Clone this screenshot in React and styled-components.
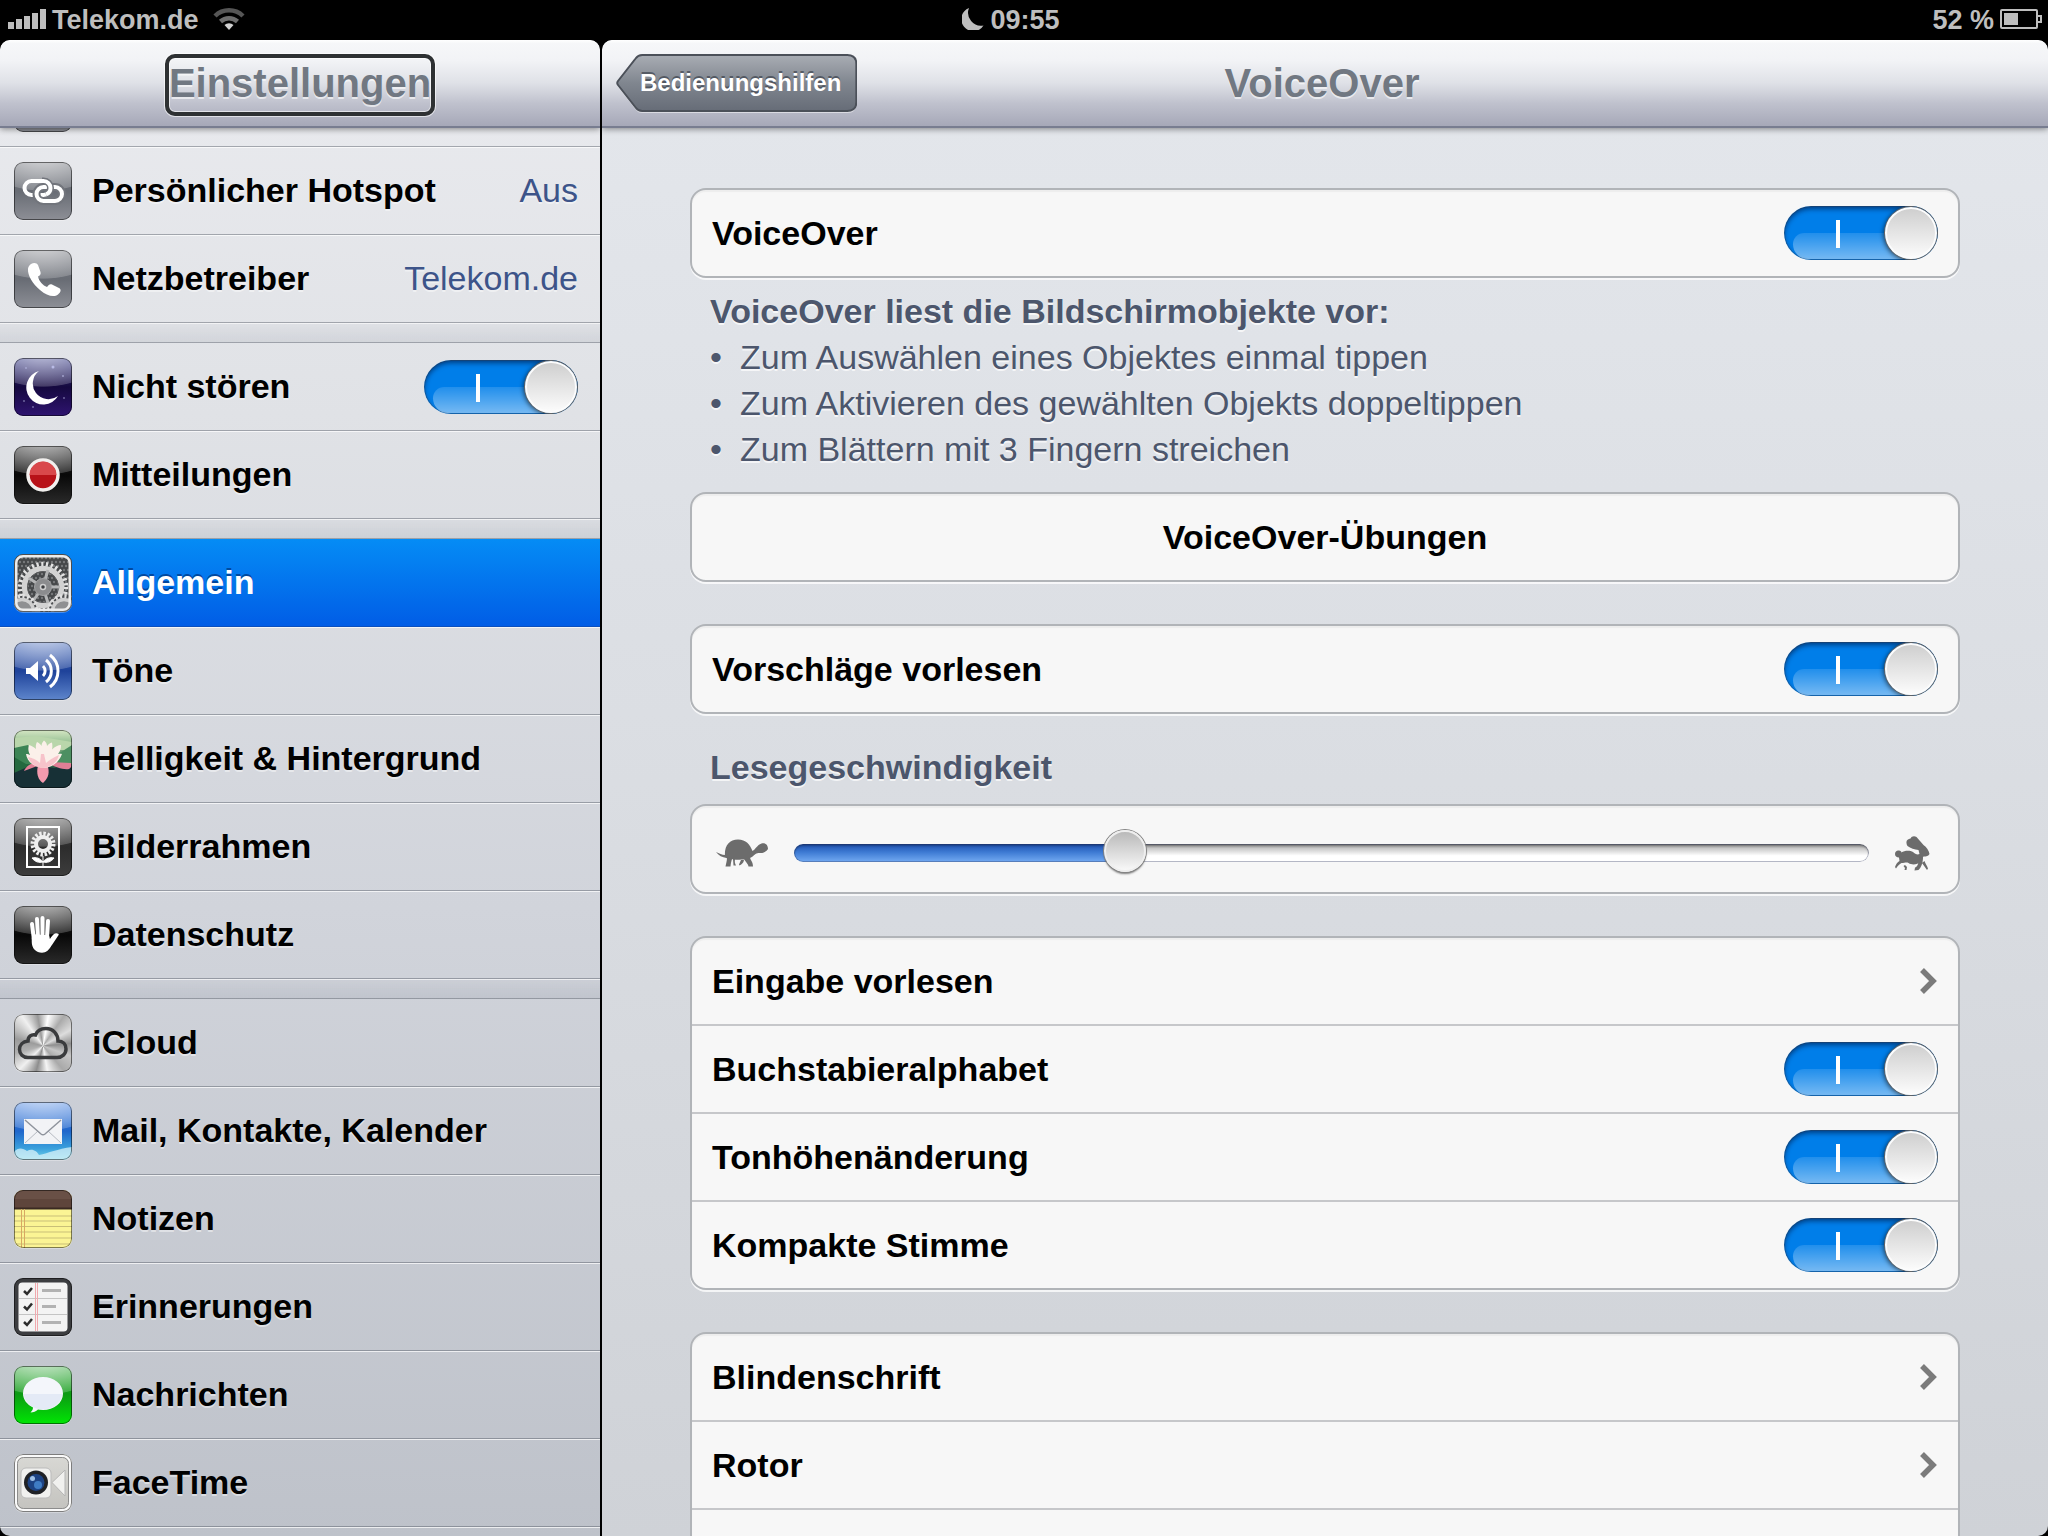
import React, { useState } from 'react'
import styled, { createGlobalStyle, css } from 'styled-components'

const GlobalStyle = createGlobalStyle`
  *,
  *::before,
  *::after {
    box-sizing: border-box;
  }

  body {
    margin: 0;
    background: #000;
    font-family: 'Liberation Sans', Arial, sans-serif;
    font-size: 34px;
    color: #000;
  }

  a {
    color: inherit;
    text-decoration: none;
  }

  ul {
    list-style: none;
    margin: 0;
    padding: 0;
  }
`

const Screen = styled.div`
  height: 100vh;
  display: flex;
  flex-direction: column;
  overflow: hidden;
`

const StatusBar = styled.div`
  height: 40px;
  flex: none;
  display: grid;
  grid-template-columns: 1fr auto 1fr;
  align-items: center;
  padding: 0 6px 0 8px;
  background: #000;
  color: #bebebe;
  font-size: 27px;
  line-height: 40px;
  font-weight: bold;
`

const StatusGroup = styled.div`
  display: flex;
  align-items: center;
  justify-content: ${({ $end }) => ($end ? 'flex-end' : 'flex-start')};
  gap: 6px;

  svg {
    flex: none;
    margin-bottom: 2px;
  }
`

const Clock = styled.div`
  position: relative;

  svg {
    position: absolute;
    right: 100%;
    top: 8px;
    margin-right: 6px;
  }
`

const Panes = styled.div`
  flex: 1;
  min-height: 0;
  display: flex;
  gap: 2px;
`

const Pane = styled.section`
  display: flex;
  flex-direction: column;
  min-height: 0;
  overflow: hidden;
`

const Sidebar = styled(Pane)`
  width: 600px;
  flex: none;
  border-radius: 10px 10px 0 10px;
  background: linear-gradient(#eaebef, #e0e2e6 25%, #d1d4db 58%, #bec2ca);
`

const Detail = styled(Pane)`
  flex: 1;
  border-radius: 10px 10px 10px 0;
  background: linear-gradient(#e4e7ec, #dbdee3 45%, #cfd2d7);
`

const NavBar = styled.header`
  position: relative;
  z-index: 1;
  height: 88px;
  flex: none;
  display: grid;
  grid-template-columns: 1fr auto 1fr;
  align-items: center;
  padding: ${({ $back }) => ($back ? '0 20px 0 14px' : '0 14px')};
  border-bottom: 2px solid #787d90;
  border-radius: 10px 10px 0 0;
  background: linear-gradient(#fff, #f6f7f9 4%, #f2f3f6 24%, #dfe1e7 50%, #bfc1cd 74%, #a6a8b8);
  box-shadow: 0 1px 6px rgba(0, 0, 0, 0.45);
`

const Title = styled.h1`
  grid-column: 2;
  margin: 4px 0 0;
  padding: 0 0 4px;
  border: 4px solid transparent;
  font-size: 40px;
  line-height: 50px;
  font-weight: bold;
  color: #717882;
  text-shadow: 0 2px 0 rgba(255, 255, 255, 0.6);
  ${({ $focused }) =>
    $focused &&
    css`
      border-color: #2e3133;
      border-radius: 10px;
      box-shadow: 0 0 0 1px rgba(255, 255, 255, 0.6), inset 0 0 0 1px rgba(255, 255, 255, 0.6);
    `}
`

const BackButton = styled.button`
  position: relative;
  justify-self: start;
  height: 58px;
  padding: 0 16px 0 24px;
  border: 0;
  background: none;
  font: bold 24px 'Liberation Sans', Arial, sans-serif;
  color: #fff;
  text-shadow: 0 -2px 0 rgba(60, 66, 76, 0.7);

  svg {
    position: absolute;
    inset: 0;
    width: 100%;
    height: 60px;
  }

  span {
    position: relative;
  }
`

/* the list is scrolled so that its first row is almost out of view */
const Menu = styled.nav`
  display: flex;
  flex-direction: column;
  gap: 20px;
  margin-top: -69px;
`

const MenuGroup = styled.ul`
  position: relative;

  & + &::before {
    content: '';
    position: absolute;
    left: 0;
    right: 0;
    bottom: 100%;
    height: 20px;
    border-bottom: 1px solid rgba(80, 86, 98, 0.45);
    background: linear-gradient(rgba(70, 80, 100, 0.02), rgba(70, 80, 100, 0.1));
  }
`

const MenuRow = styled.li`
  height: 88px;
  display: flex;
  align-items: center;
  gap: 20px;
  padding: 0 22px 0 14px;
  border-bottom: 1px solid rgba(80, 86, 98, 0.45);
  box-shadow: 0 1px 0 rgba(255, 255, 255, 0.7);
  font-weight: bold;
  text-shadow: 0 2px 0 rgba(255, 255, 255, 0.45);

  ${({ $active }) =>
    $active &&
    css`
      border-color: #0b4fbd;
      background: linear-gradient(#058cf5, #015de6);
      color: #fff;
      text-shadow: 0 -2px 0 rgba(0, 30, 90, 0.55);
    `}
`

const MenuLabel = styled.label`
  flex: 1;
  white-space: nowrap;
`

const MenuValue = styled.span`
  font-weight: normal;
  color: #3d5489;
`

const Tile = styled.span`
  width: 58px;
  height: 58px;
  flex: none;
  border-radius: 9px;
  overflow: hidden;
  background: ${({ $fill }) => $fill};
  box-shadow: 0 1px 0 rgba(255, 255, 255, 0.3);

  svg {
    display: block;
  }
`

const Switch = styled.input.attrs({ type: 'checkbox' })`
  appearance: none;
  position: relative;
  width: 154px;
  height: 54px;
  flex: none;
  margin: 0;
  overflow: hidden;
  border-radius: 27px;
  background: linear-gradient(#fff, #fff) 52px 14px / 4px 28px no-repeat, #007ee9;
  box-shadow: inset 0 0 0 1px rgba(60, 60, 70, 0.35), inset 0 3px 5px rgba(0, 20, 60, 0.6);

  &::before {
    content: '';
    position: absolute;
    left: 9px;
    right: 0;
    top: 27px;
    bottom: 1px;
    border-radius: 18px 0 0 24px;
    background: linear-gradient(rgba(255, 255, 255, 0.13), rgba(255, 255, 255, 0.46));
  }

  &::after {
    content: '';
    position: absolute;
    top: 1px;
    right: 1px;
    width: 52px;
    height: 52px;
    border: 2px solid #fcfcfc;
    border-radius: 50%;
    background: linear-gradient(#cfcfcf, #fbfbfb);
    box-shadow: 0 0 0 1px #666, -1px 1px 4px 1px rgba(0, 0, 0, 0.5);
  }

  &:not(:checked) {
    background: #e4e4e4;
  }

  &:not(:checked)::after {
    right: auto;
    left: 1px;
  }
`

const Content = styled.main`
  padding: 60px 88px 0;
`

const Card = styled.div`
  border: 2px solid #b1b4b8;
  border-radius: 16px;
  background: #f7f7f7;
  box-shadow: 0 2px 0 rgba(255, 255, 255, 0.75), inset 0 2px 1px rgba(0, 0, 0, 0.04);

  & + & {
    margin-top: 42px;
  }
`

const rowStyle = css`
  width: 100%;
  height: 88px;
  display: flex;
  align-items: center;
  justify-content: space-between;
  padding: 0 20px;
  border-bottom: 2px solid #c6c7ca;
  font-weight: bold;

  &:last-child {
    height: 86px;
    border-bottom: 0;
  }
`

const Row = styled.div`
  ${rowStyle}
`

const LinkRow = styled.a`
  ${rowStyle}
`

const CardButton = styled.button`
  display: block;
  width: 100%;
  height: 86px;
  padding: 0;
  border: 0;
  background: none;
  font: bold 34px 'Liberation Sans', Arial, sans-serif;
  color: #000;
`

const Note = styled.div`
  padding: 10px 20px 20px;
  line-height: 46px;
  color: #4c566c;
  text-shadow: 0 2px 0 rgba(255, 255, 255, 0.7);

  strong {
    display: block;
  }

  li {
    display: flex;
  }

  li::before {
    content: '•';
    width: 30px;
  }
`

const SectionLabel = styled.label`
  display: block;
  padding: 30px 20px 14px;
  line-height: 46px;
  font-weight: bold;
  color: #4c566c;
  text-shadow: 0 2px 0 rgba(255, 255, 255, 0.7);
`

const SliderRow = styled.div`
  height: 86px;
  display: flex;
  align-items: center;
  gap: 26px;
  padding: 8px 28px 0 24px;

  svg {
    flex: none;
  }
`

const Slider = styled.input.attrs({ type: 'range' })`
  appearance: none;
  flex: 1;
  min-width: 0;
  height: 42px;
  margin: 0;
  background: none;

  &::-webkit-slider-runnable-track {
    height: 18px;
    border-radius: 9px;
    background: linear-gradient(#1e4fae, #3d7ad3 45%, #73aaf2) 0 0 / var(--fill) 100% no-repeat,
      linear-gradient(#8b8b8b, #c9c9c9 25%, #fff 65%, #fff);
    box-shadow: inset 0 0 0 1px rgba(40, 50, 90, 0.35), inset 0 2px 2px rgba(0, 0, 0, 0.25);
  }

  &::-webkit-slider-thumb {
    appearance: none;
    width: 42px;
    height: 42px;
    margin-top: -14px;
    border: 2px solid #eee;
    border-radius: 50%;
    background: linear-gradient(#b9b9b9, #f8f8f8);
    box-shadow: 0 0 0 1px #858585, 0 2px 2px rgba(0, 0, 0, 0.5);
  }
`

const gloss =
  'radial-gradient(ellipse 66px 40px at 50% -11px, rgba(255,255,255,.75), rgba(255,255,255,.2) 98%, transparent 100%)'

const fills = {
  gray: `${gloss}, linear-gradient(#7d8087, #686c74 50%, #8d8f96)`,
  night: `${gloss}, linear-gradient(#3b3f8c, #15093f 50%, #2f1470)`,
  black: `${gloss}, linear-gradient(#333, #080808 50%, #2a2a2a)`,
  dark: `${gloss}, linear-gradient(#4a4a4a, #2c2c2c 50%, #3d3d3d)`,
  gear: '#454749',
  blue: `${gloss}, linear-gradient(#4e70bd, #1e429a 50%, #5e86cc)`,
  lotus: 'linear-gradient(#d5e6c4, #8dbb8c 25%, #2f6347 60%, #14262c)',
  metal:
    'conic-gradient(from 10deg at 50% 55%, #fff, #aaa 25deg, #ddd 50deg, #8f8f8f 75deg, #c6c6c6 100deg, #a9a9a9 130deg, #f5f5f5 160deg, #8d8d8d 185deg, #f0f0f0 215deg, #b0b0b0 245deg, #9b9b9b 275deg, #f0f0f0 315deg, #999 340deg, #fff)',
  mail: `${gloss}, linear-gradient(#5b90e4, #1f66cb 50%, #3aa0dc 80%, #74d6ea)`,
  notes: '#fbf494',
  list: '#3c3d40',
  green: `${gloss}, linear-gradient(#4fb455, #0c9a13 48%, #00e604)`,
  facetime: 'linear-gradient(#d9d9d5, #c3c2be)',
}

function Glyph({ name }) {
  switch (name) {
    case 'hotspot':
      return (
        <g fill="none" stroke="#fff" strokeWidth="4">
          <rect x="10.5" y="19" width="26" height="14" rx="7" />
          <rect x="22.5" y="25" width="25.500" height="14" rx="7" stroke="#72757c" strokeWidth="8" />
          <rect x="22.5" y="25" width="25.500" height="14" rx="7" />
          <path d="M28 19h1.500a7 7 0 0 1 7 7c0 3-2 5.500-4.500 6.500" stroke="#72757c" strokeWidth="7" />
          <path d="M26 19h3.500a7 7 0 0 1 7 7c0 3-2 5.500-4.500 6.500" />
        </g>
      )
    case 'phone':
      return (
        <path
          fill="#fff"
          d="M17 14c3-2 6-1 7 1l2.500 7c.7 2-.5 3.500-2.500 4.500 1 5 5 9 9 10.500 1.500-2 3-3.500 5-2.500l7 3.500c2.500 1.500 2 4-1 6.500-4 3-11 1.500-18-4.500C18.500 34 13.500 25 14 19c.2-2 1.200-4 3-5z"
        />
      )
    case 'moon':
      return (
        <g fill="#fff">
          <path d="M25 13a17 17 0 1 0 19 25A15 15 0 0 1 25 13z" />
          <g fill="#b9bbe6">
            <circle cx="39" cy="9" r="1.500" />
            <circle cx="12" cy="10" r="1" opacity=".6" />
            <circle cx="49" cy="18" r="1" opacity=".7" />
            <circle cx="10" cy="43" r="1" opacity=".5" />
            <circle cx="50" cy="40" r="1" opacity=".5" />
            <circle cx="19" cy="49" r="1" opacity=".5" />
          </g>
        </g>
      )
    case 'record':
      return (
        <g>
          <circle cx="29" cy="29" r="15" fill="#b81218" stroke="#f2f0ee" strokeWidth="3.500" />
          <path d="M15.500 29a13.500 13.500 0 0 1 27 0z" fill="#d9484b" />
        </g>
      )
    case 'gear':
      return (
        <g>
          <g fill="#77797b">
            {Array.from({ length: 13 * 13 }, (_, i) => (
              <circle key={i} cx={4 + (i % 13) * 4 + (Math.floor(i / 13) % 2) * 2} cy={4 + Math.floor(i / 13) * 4} r="1.200" />
            ))}
          </g>
          <circle cx="29" cy="33" r="23" fill="none" stroke="#e4e4e4" strokeWidth="4.500" strokeDasharray="2.200 2.614" />
          <circle cx="29" cy="33" r="18.500" fill="none" stroke="#d2d2d2" strokeWidth="5.500" />
          <circle cx="29" cy="33" r="15.500" fill="none" stroke="#5b5c5e" strokeWidth="1" />
          <path
            d="M29 33L34 16M29 33L14.500 24M29 33L19 47M29 33L34 49M29 33H46"
            stroke="#b4b5b6"
            strokeWidth="3"
          />
          <circle cx="29" cy="33" r="8.500" fill="#8b8c8e" stroke="#a2a3a5" strokeWidth="1" />
          <circle cx="29" cy="33" r="2.500" fill="#3b3d40" stroke="#cfcfcf" strokeWidth="1.500" />
          <circle cx="8" cy="57" r="15" fill="#4a4c4f" stroke="#e0e0e0" strokeWidth="4" strokeDasharray="2.200 2.513" />
          <circle cx="50" cy="57" r="15" fill="#4a4c4f" stroke="#e0e0e0" strokeWidth="4" strokeDasharray="2.200 2.513" />
          <g fill="#8f9092" stroke="#cfcfcf" strokeWidth="3.500">
            <circle cx="8" cy="57" r="11.500" />
            <circle cx="50" cy="57" r="11.500" />
          </g>
          <rect x="2" y="2" width="54" height="54" rx="7" fill="none" stroke="#ececec" strokeWidth="3" />
        </g>
      )
    case 'sound':
      return (
        <g>
          <path d="M12 26h4l8-7v20l-8-7h-4z" fill="#fff" />
          <g fill="none" stroke="#fff" strokeWidth="3">
            <path d="M29 24a7 7 0 0 1 0 10" />
            <path d="M32 18a14 14 0 0 1 0 22" />
            <path d="M36 13a20 20 0 0 1 0 32" />
          </g>
        </g>
      )
    case 'lotus':
      return (
        <g>
          <path d="M0 8l22-2 36 6v8L0 20z" fill="#b9d6ab" />
          <path d="M0 18l14-3 10 10-8 12-16 2z" fill="#3c8455" />
          <path d="M44 24l14-9v20l-18-1z" fill="#4d8f62" />
          <path d="M0 40l20-6 20 4 18-4v24H0z" fill="#173036" />
          <path d="M0 27l12 7 8 0-20 9z" fill="#24693f" />
          <path d="M26 35l-16 6c2-5 7-8 14-9zM36 32l21 1c1 3 0 5-2 6-6 1-14-2-19-5z" fill="#e17f96" />
          <path d="M24 36l10 1c2 8-1 12-5 16-5-3-7-10-5-17z" fill="#f49aae" />
          <path
            d="M29 38C19 37 13 31 12 24c2 0 3 .5 4 1-2-4-2-7-1-10 3 1 5 2 7 4-.5-3 0-5 1-7 2 1 3.500 2 4.500 4 0-2 1-4 2.500-5.500 2 1.500 3 3.500 3 5.500 1.500-2 3-3 5-3.500.5 3 .5 5 0 7 3-3 6-4.500 9-4.500 0 4-1 6-3 9 1-.5 3-.5 4 0-3 8-9 13.500-19 14z"
            fill="#fbf0ea"
          />
          <path d="M29 38c-8-1-13-5-15-11 5 1 9 3 12 6l1-9 3 0 2 9c3-3 7-5 13-8-2 8-8 12-16 13z" fill="#f5b4bf" opacity=".75" />
        </g>
      )
    case 'frame':
      return (
        <g>
          <rect x="13" y="9" width="32" height="40" fill="none" stroke="#fff" strokeWidth="2" />
          <circle cx="29" cy="26" r="10" fill="none" stroke="#eee" strokeWidth="5" strokeDasharray="2.300 1.627" />
          <circle cx="29" cy="26" r="7" fill="none" stroke="#eee" strokeWidth="4" />
          <path d="M29 38v11M29 44c-3-4-7-5-11-4 3 4 7 5 11 4zm0 0c3-4 7-5 11-4-3 4-7 5-11 4z" fill="#fff" stroke="#fff" strokeWidth="1" />
        </g>
      )
    case 'hand':
      return (
        <g fill="#fff" stroke="#fff" strokeLinecap="round" strokeLinejoin="round">
          <path d="M18 18l2 16M23 13l1 18M28.500 12v18M34 15l-1 16" strokeWidth="4" />
          <path d="M18.500 32v4c0 6 4 10 9.500 10 5 0 7-3 9-7l7-10.500c-3-1.500-5 1-8.500 6.500l-1-5-14-1z" strokeWidth="1.500" />
        </g>
      )
    case 'cloud':
      return (
        <path
          d="M14 43.500h29c5 0 9-3.500 9-8.500 0-4.500-3-8-8-8 0-7-5-12.500-12-12.500-5 0-9 2.500-10.500 6.500-4-1-7.500 1.500-7.500 6-5 .5-8.500 4-8.500 8.500s3.500 8 8.500 8z"
          fill="none"
          stroke="#3a3b3d"
          strokeWidth="3.500"
        />
      )
    case 'mail':
      return (
        <g>
          <path d="M0 50c4-5 9-4 13-1 5-3 10 0 12 4 10-2 18-6 33-8v13H0z" fill="#d8f1f8" opacity=".75" />
          <rect x="10" y="17" width="38" height="25" fill="#f2f3f6" />
          <path d="M11 41l13-12M47 41L34 29" stroke="#b6bac2" strokeWidth="1" />
          <path d="M11 18l16 14q2 1.500 4 0l16-14" fill="none" stroke="#8f949d" strokeWidth="1.500" />
        </g>
      )
    case 'notes':
      return (
        <g>
          <rect width="58" height="18" fill="#5e453b" />
          <rect width="58" height="9" fill="#7a6257" opacity=".4" />
          <path d="M0 18.500h58" stroke="#3a2a22" strokeWidth="2" />
          <path d="M0 26h58M0 31h58M0 36.500h58M0 42h58M0 48h58M0 54h58" stroke="#c9bf78" strokeWidth="1" />
          <path d="M7.500 19v39M10.500 19v39" stroke="#d8a862" strokeWidth="1" />
        </g>
      )
    case 'reminders':
      return (
        <g>
          <rect x="4.500" y="4.500" width="49" height="49" rx="4" fill="#f3f3f3" />
          <path d="M5 20.500h48M5 36.500h48" stroke="#c4c4c4" strokeWidth="1" />
          <path d="M21.500 5v48M23.500 5v48" stroke="#f0a9ae" strokeWidth="1" />
          <path d="M28 12.500h19M28 28.500h14M28 44.500h19" stroke="#b2b2b2" strokeWidth="3" />
          <path d="M10 13l3 3 5-6M10 28.500l3 3 5-6M10 44l3 3 5-6" fill="none" stroke="#2d2d2d" strokeWidth="2.500" />
        </g>
      )
    case 'bubble':
      return (
        <g>
          <path d="M29 11c11 0 20 7 20 16.500S40 44 29 44c-2 0-3.500-.2-5-.5-2 2-4.500 3-7.500 3 1.500-1.500 2.500-3 2.500-5-6-3-10-8-10-14C9 18 18 11 29 11z" fill="#f4f6fb" />
          <path d="M9.500 28h39C47 37 39 43.500 29 43.500S11 37 9.500 28z" fill="#dde5f3" opacity=".7" />
        </g>
      )
    case 'facetime':
      return (
        <g>
          <rect x="1.500" y="1.500" width="55" height="55" rx="8" fill="none" stroke="#fafafa" strokeWidth="3" />
          <rect x="3.500" y="3.500" width="51" height="51" rx="6" fill="none" stroke="#8c8c8c" strokeWidth="1" />
          <rect x="7" y="14" width="30" height="30" rx="5" fill="#f1f1ef" stroke="#bbb" strokeWidth="1" />
          <path d="M38 28.500l13-12.500v26z" fill="#f1f1ef" stroke="#b5b5b5" strokeWidth="1" />
          <circle cx="22" cy="28.500" r="12" fill="#202226" />
          <circle cx="22" cy="28.500" r="8.500" fill="#1d4384" />
          <circle cx="24" cy="31" r="4" fill="#3f7cc4" />
          <circle cx="18.500" cy="24.500" r="2.500" fill="#9fc0e6" />
        </g>
      )
    default:
      return null
  }
}

function AppIcon({ fill, glyph }) {
  return (
    <Tile $fill={fills[fill]}>
      <svg width="58" height="58" viewBox="0 0 58 58" aria-hidden="true">
        <Glyph name={glyph} />
        <rect x=".5" y=".5" width="57" height="57" rx="8.500" fill="none" stroke="#000" strokeOpacity=".5" />
      </svg>
    </Tile>
  )
}

function Chevron() {
  return (
    <svg width="18" height="26" viewBox="0 0 18 26" aria-hidden="true">
      <path d="M2 2l11 11L2 24" fill="none" stroke="#7b7b7b" strokeWidth="5.500" />
    </svg>
  )
}

function Turtle() {
  return (
    <svg width="52" height="28" viewBox="0 0 52 28" fill="#6c6c6c" aria-hidden="true">
      <path d="M9 18C8 7 13 .5 22 .5c8 0 12 5 14.500 11.500 3-1.500 4.500-6 9-7.500 4-1 6.500 1.500 6.500 5.500-2 3-5 4.500-9.500 4-3 0-4.500 3-8.500 5-3 2-20 2.500-23.500 0-4-.5-8-2.500-10.500-6 3 1.500 6 3 9 3z" />
      <path d="M11 18l5 2c-.5 2-1 2.500-1.500 7.500h-5c.5-3 1.500-5 1.500-9.500zM28 20l6-2c0 3 3 4.500 3 9.500h-4.500c0-2-3-5-4.500-7.500zM17 20l2 0c-.5 3 0 4.500 1 6.500h-2.500zM25 21h3c-.5 3-2 4-4.500 5.500l-.5-1z" />
    </svg>
  )
}

function Rabbit() {
  return (
    <svg width="35" height="35" viewBox="0 0 35 35" fill="#6c6c6c" aria-hidden="true">
      <path d="M11.500 7c-.5-2.500 1.500-4 4-4.500 1-2.500 4-3 6-1.500l7 8c3 2 5.500 5.500 6 9-1 2-3 2.500-6 2.500l-3 5c-3 3-8 4-12 1.500-2-1-4 0-7 0-2 1-4 3-5.500 5.500L0 31c1-3 2.500-5 4.500-6L4 21.500C1.500 21.500 0 20 0 18c0-2.500 2-4 4-3.500 1.500 0 2.500 1 2.500 2C9 14.500 15 14 18 16c2 2 4.500 3 6.500 2l-1-4c-4-.5-8-1.500-11-4-.7-1-1-2-1-3z" />
      <path d="M24 22l4-1c0 6-2 11-4.500 13l-4 .5.500-3c2.500-.5 3.500-4 4-9.500zM27 27l2.500-2c1 3 2.500 4.500 3.500 7.500L32 34zM10 29l2 2-.5 3h-2l.5-2-1.500-2z" />
    </svg>
  )
}

const menu = [
  [
    { id: 'cellular', fill: 'gray' },
    { id: 'hotspot', fill: 'gray', glyph: 'hotspot', label: 'Persönlicher Hotspot', value: 'Aus' },
    { id: 'carrier', fill: 'gray', glyph: 'phone', label: 'Netzbetreiber', value: 'Telekom.de' },
  ],
  [
    { id: 'dnd', fill: 'night', glyph: 'moon', label: 'Nicht stören', toggle: true },
    { id: 'notifications', fill: 'black', glyph: 'record', label: 'Mitteilungen' },
  ],
  [
    { id: 'general', fill: 'gear', glyph: 'gear', label: 'Allgemein', active: true },
    { id: 'sounds', fill: 'blue', glyph: 'sound', label: 'Töne' },
    { id: 'wallpaper', fill: 'lotus', glyph: 'lotus', label: 'Helligkeit & Hintergrund' },
    { id: 'frame', fill: 'dark', glyph: 'frame', label: 'Bilderrahmen' },
    { id: 'privacy', fill: 'black', glyph: 'hand', label: 'Datenschutz' },
  ],
  [
    { id: 'icloud', fill: 'metal', glyph: 'cloud', label: 'iCloud' },
    { id: 'mail', fill: 'mail', glyph: 'mail', label: 'Mail, Kontakte, Kalender' },
    { id: 'notes', fill: 'notes', glyph: 'notes', label: 'Notizen' },
    { id: 'reminders', fill: 'list', glyph: 'reminders', label: 'Erinnerungen' },
    { id: 'messages', fill: 'green', glyph: 'bubble', label: 'Nachrichten' },
    { id: 'facetime', fill: 'facetime', glyph: 'facetime', label: 'FaceTime' },
  ],
]

function MenuItem({ item }) {
  return (
    <MenuRow $active={item.active}>
      <AppIcon fill={item.fill} glyph={item.glyph} />
      {item.toggle ? (
        <>
          <MenuLabel htmlFor={item.id}>{item.label}</MenuLabel>
          <Switch id={item.id} defaultChecked />
        </>
      ) : (
        item.label && (
          <MenuLabel as="a" href={`#${item.id}`}>
            {item.label}
          </MenuLabel>
        )
      )}
      {item.value && <MenuValue>{item.value}</MenuValue>}
    </MenuRow>
  )
}

function ToggleRow({ id, label }) {
  return (
    <Row>
      <label htmlFor={id}>{label}</label>
      <Switch id={id} defaultChecked />
    </Row>
  )
}

function DisclosureRow({ id, label }) {
  return (
    <LinkRow href={`#${id}`}>
      {label}
      <Chevron />
    </LinkRow>
  )
}

function App() {
  const [rate, setRate] = useState(30)

  return (
    <Screen>
      <GlobalStyle />
      <StatusBar>
        <StatusGroup>
          <svg width="38" height="20" viewBox="0 0 38 20" fill="#bebebe" aria-hidden="true">
            <path d="M0 13h6v7H0zM8 10h6v10H8zM16 7h6v13h-6zM24 4h6v16h-6zM32 0h6v20h-6z" />
          </svg>
          <span>Telekom.de</span>
          <svg width="48" height="24" viewBox="-8 0 48 24" fill="none" aria-hidden="true">
            <path d="M2 9a20 20 0 0 1 28 0" stroke="#565656" strokeWidth="4.500" />
            <path d="M7.500 14.500a12.500 12.500 0 0 1 17 0" stroke="#6e6e6e" strokeWidth="4.500" />
            <path d="M16 23l-4.500-5a6.500 6.500 0 0 1 9 0z" fill="#d0d0d0" />
          </svg>
        </StatusGroup>
        <Clock>
          <svg width="22" height="22" viewBox="0 0 22 22" fill="#bebebe" aria-hidden="true">
            <path d="M7 0A12 12 0 1 0 21.500 17.500 13 13 0 0 1 7 0z" />
          </svg>
          09:55
        </Clock>
        <StatusGroup $end>
          <span>52 %</span>
          <svg width="42" height="20" viewBox="0 0 42 20" aria-hidden="true">
            <rect x="1" y="1" width="36" height="18" rx="1" fill="none" stroke="#bebebe" strokeWidth="2" />
            <rect x="4" y="4" width="14" height="12" fill="#bebebe" />
            <path d="M38 7h3v6h-3" fill="none" stroke="#bebebe" strokeWidth="2" />
          </svg>
        </StatusGroup>
      </StatusBar>

      <Panes>
        <Sidebar>
          <NavBar>
            <Title $focused>Einstellungen</Title>
          </NavBar>
          <Menu>
            {menu.map((group) => (
              <MenuGroup key={group[0].id}>
                {group.map((item) => (
                  <MenuItem key={item.id} item={item} />
                ))}
              </MenuGroup>
            ))}
          </Menu>
        </Sidebar>

        <Detail>
          <NavBar $back>
            <BackButton type="button">
              <svg viewBox="0 0 240 60" preserveAspectRatio="none" aria-hidden="true">
                <defs>
                  <linearGradient id="backFill" x1="0" y1="0" x2="0" y2="1">
                    <stop offset="0" stopColor="#a9adb4" />
                    <stop offset=".5" stopColor="#80868f" />
                    <stop offset="1" stopColor="#666c77" />
                  </linearGradient>
                </defs>
                <path
                  d="M26 3h204q9 0 9 9v38q0 9-9 9H26q-4 0-6.500-3.500L2 33q-1.500-2 0-4L19.500 6.500Q22 3 26 3z"
                  fill="#fff"
                  opacity=".5"
                />
                <path
                  d="M26 1h204q9 0 9 9v38q0 9-9 9H26q-4 0-6.500-3.500L2 31q-1.500-2 0-4L19.500 4.500Q22 1 26 1z"
                  fill="url(#backFill)"
                  stroke="#4b5059"
                  strokeWidth="2"
                />
              </svg>
              <span>Bedienungshilfen</span>
            </BackButton>
            <Title>VoiceOver</Title>
          </NavBar>

          <Content>
            <Card>
              <ToggleRow id="voiceover" label="VoiceOver" />
            </Card>
            <Note>
              <strong>VoiceOver liest die Bildschirmobjekte vor:</strong>
              <ul>
                <li>Zum Auswählen eines Objektes einmal tippen</li>
                <li>Zum Aktivieren des gewählten Objekts doppeltippen</li>
                <li>Zum Blättern mit 3 Fingern streichen</li>
              </ul>
            </Note>
            <Card>
              <CardButton type="button">VoiceOver-Übungen</CardButton>
            </Card>
            <Card>
              <ToggleRow id="hints" label="Vorschläge vorlesen" />
            </Card>
            <SectionLabel htmlFor="rate">Lesegeschwindigkeit</SectionLabel>
            <Card>
              <SliderRow>
                <Turtle />
                <Slider
                  id="rate"
                  min="0"
                  max="100"
                  value={rate}
                  onChange={(e) => setRate(Number(e.target.value))}
                  style={{ '--fill': `${rate}%` }}
                />
                <Rabbit />
              </SliderRow>
            </Card>
            <Card>
              <DisclosureRow id="typing" label="Eingabe vorlesen" />
              <ToggleRow id="phonetics" label="Buchstabieralphabet" />
              <ToggleRow id="pitch" label="Tonhöhenänderung" />
              <ToggleRow id="compact" label="Kompakte Stimme" />
            </Card>
            <Card>
              <DisclosureRow id="braille" label="Blindenschrift" />
              <DisclosureRow id="rotor" label="Rotor" />
              <Row />
            </Card>
          </Content>
        </Detail>
      </Panes>
    </Screen>
  )
}

export default App
